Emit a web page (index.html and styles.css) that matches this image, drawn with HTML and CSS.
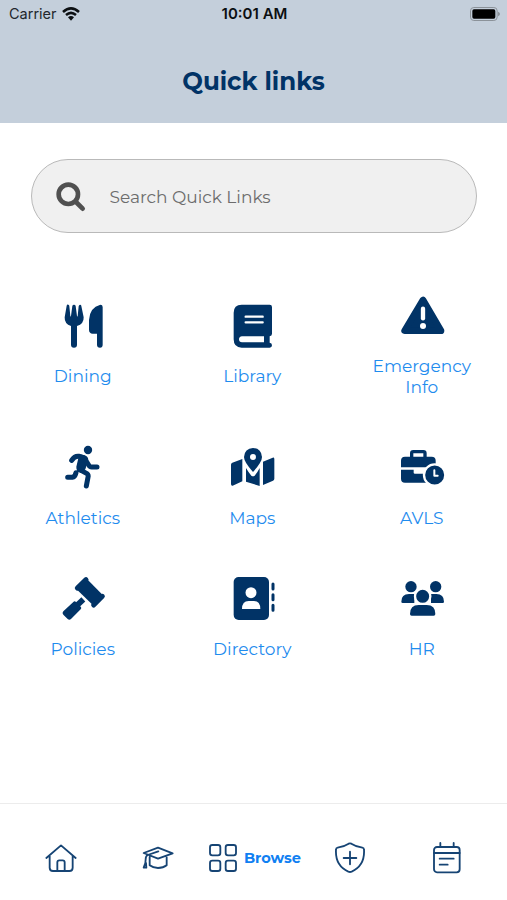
FILE: index.html
```html
<!DOCTYPE html>
<html lang="en">
<head>
    <meta charset="UTF-8">
    <meta name="viewport" content="width=device-width, initial-scale=1.0">
    <title>Quick links</title>
    <link rel="stylesheet" href="styles.css">
</head>
<body>
    <!-- Header -->
    <header class="header">
        <div class="status-bar">
            <div class="carrier">
                <span>Carrier</span>
                <svg class="wifi" viewBox="0 0 54 42">
                    <path d="M3 15Q27 -7 51 15M12 24Q27 11 42 24" fill="none" stroke="#0c0f12" stroke-width="7.500"/>
                    <path d="M18 31Q27 23 36 31L27 41Z" fill="#0c0f12"/>
                </svg>
            </div>
            <span class="time">10:01 AM</span>
            <svg class="battery" viewBox="0 0 90 42">
                <rect x="1.5" y="1.5" width="80" height="39" rx="10" fill="none" stroke="#8b9299" stroke-width="3"/>
                <rect x="7" y="7" width="69" height="28" rx="5" fill="#000"/>
                <path d="M84 14Q90 17 90 21Q90 25 84 28Z" fill="#8b9299"/>
            </svg>
        </div>
        <h1>Quick links</h1>
    </header>

    <!-- Main content -->
    <main class="main-content">
        <div class="search">
            <svg viewBox="0 0 90 90">
                <circle cx="37" cy="37" r="29" fill="none" stroke="#505050" stroke-width="14"/>
                <path d="M60 60L80 80" stroke="#505050" stroke-width="14" stroke-linecap="round"/>
            </svg>
            <input type="text" placeholder="Search Quick Links" aria-label="Search Quick Links">
        </div>

        <div class="links">
            <a class="link">
                <svg viewBox="0 0 132 132">
                    <path d="M17 5Q18 1 22 2Q25 2 25 7L28 36Q29 39 30 36L34 6Q35 2 39 2Q43 2 44 6L48 36Q49 39 50 36L53 7Q54 2 57 2Q61 2 61 6L68 40Q69 60 48 66V122Q48 131 39 131Q30 131 30 122V66Q10 60 11 40Z"/>
                    <path d="M118 2Q125 2 125 9V122Q125 131 117 131Q108 131 108 122V89H95Q84 88 84 77V48Q86 10 118 2Z"/>
                </svg>
                <span>Dining</span>
            </a>
            <a class="link">
                <svg viewBox="-1 0 132 132">
                    <path fill-rule="evenodd" d="M34 2H118Q125 2 125 9V89Q125 95 118 97V116Q125 117 125 124Q125 131 118 131H34Q10 131 10 106V26Q10 2 34 2ZM35 97Q26 98 26 106Q26 115 35 115H101V97Z"/>
                    <path class="cut" d="M46 38H97M46 55H97"/>
                </svg>
                <span>Library</span>
            </a>
            <a class="link">
                <svg viewBox="0 0 132 132">
                    <path d="M69 18L14 110H123Z" stroke="#013366" stroke-width="20" stroke-linejoin="round"/>
                    <path d="M69 44V73" stroke="#fff" stroke-width="13" stroke-linecap="round"/>
                    <circle cx="69" cy="96" r="9" fill="#fff"/>
                </svg>
                <span>Emergency<br>Info</span>
            </a>
            <a class="link">
                <svg viewBox="0 0 132 132">
                    <circle cx="81" cy="12" r="12.500"/>
                    <path d="M54 23L73 29Q84 33 81 44L73 70L60 81Q45 76 46 62L52 37Z"/>
                    <path class="limb" d="M32 43Q41 29 54 31L69 35L83 57Q86 63 92 63H108M56 71L78 83Q83 87 81 94L76 120M45 80Q42 93 34 94H20"/>
                </svg>
                <span>Athletics</span>
            </a>
            <a class="link">
                <svg viewBox="-1 0 132 132">
                    <path d="M6 50L36 39V106L7 119Q2 120 2 114V56Q2 52 6 50ZM98 47L127 35Q132 34 132 39V98Q132 102 128 104L98 117Z"/>
                    <path d="M47 66Q55 80 63 89Q68 93 73 89Q81 80 88 66V120L47 107Z"/>
                    <path d="M68 78Q41 48 41 33Q43 7 68 6Q93 7 95 33Q95 48 68 78Z"/>
                    <circle cx="68" cy="33" r="9" fill="#fff"/>
                </svg>
                <span>Maps</span>
            </a>
            <a class="link">
                <svg viewBox="0 0 132 132">
                    <path d="M35 36V22Q35 17 40 17H70Q75 17 75 22V36" fill="none" stroke="#013366" stroke-width="10"/>
                    <path d="M15 32H95Q107 32 107 44V64H3V44Q3 32 15 32ZM3 71H41V80Q41 83 45 83H107V110H15Q3 110 3 98Z"/>
                    <circle cx="104" cy="87" r="32" stroke="#fff" stroke-width="7"/>
                    <path d="M103 73V89H113" fill="none" stroke="#fff" stroke-width="6" stroke-linecap="round" stroke-linejoin="round"/>
                </svg>
                <span>AVLS</span>
            </a>
            <a class="link">
                <svg viewBox="0 0 132 132">
                    <path d="M49 39L80 8L123 52L93 82Z"/>
                    <path d="M49 33L75 8M98 84L124 58" stroke="#013366" stroke-width="15" stroke-linecap="round"/>
                    <path d="M48 85L67 67" stroke="#013366" stroke-width="17"/>
                    <path d="M37 75Q41 71 45 75L59 89Q63 93 59 97L30 126Q25 131 20 126L7 113Q2 108 7 103Z"/>
                </svg>
                <span>Policies</span>
            </a>
            <a class="link">
                <svg viewBox="0 0 132 132">
                    <rect x="11" y="0" width="106" height="129" rx="15"/>
                    <circle cx="63" cy="47" r="16.500" fill="#fff"/>
                    <path d="M36 96Q36 72 56 72H71Q91 72 91 96Z" fill="#fff"/>
                    <path d="M129 21V36M129 53V68M129 85V100" stroke="#013366" stroke-width="9" stroke-linecap="round"/>
                </svg>
                <span>Directory</span>
            </a>
            <a class="link">
                <svg viewBox="0 0 132 132">
                    <circle cx="33" cy="29" r="17"/>
                    <circle cx="107" cy="29" r="17"/>
                    <path d="M4 74Q4 51 27 51H43V78H8Q4 78 4 74ZM93 51H109Q132 51 132 74Q132 78 128 78H93Z"/>
                    <circle cx="68" cy="58" r="23" stroke="#fff" stroke-width="7"/>
                    <path d="M30 111Q30 84 56 84H80Q106 84 106 111Q106 116 101 116H35Q30 116 30 111Z"/>
                </svg>
                <span>HR</span>
            </a>
        </div>
    </main>

    <!-- Bottom navigation -->
    <nav class="tab-bar">
        <a class="tab">
            <svg viewBox="0 0 96 96">
                <path d="M4 48L48 10L92 48M14 42V77Q14 87 24 87H73Q83 87 83 77V42M37 87V61Q37 55 43 55H53Q59 55 59 61V87"/>
            </svg>
        </a>
        <a class="tab">
            <svg viewBox="0 0 96 96">
                <path d="M5 33L48 17L92 34L48 50ZM23 45V70Q33 78 48 78Q64 78 74 70V46M49 28L17 39Q11 42 11 52L10 63M10 63L5 77H13L12 63"/>
            </svg>
        </a>
        <a class="tab">
            <svg viewBox="0 0 96 96">
                <rect x="9" y="9" width="31" height="31" rx="7"/>
                <rect x="56" y="9" width="31" height="31" rx="7"/>
                <rect x="9" y="56" width="31" height="31" rx="7"/>
                <rect x="56" y="56" width="31" height="31" rx="7"/>
            </svg>
            <span>Browse</span>
        </a>
        <a class="tab">
            <svg viewBox="0 0 96 96">
                <path d="M44 5Q48 3 52 5Q66 14 85 17Q90 18 90 23Q93 71 53 89Q48 91 43 89Q3 71 6 23Q6 18 11 17Q30 14 44 5ZM48 29V67M29 48H67"/>
            </svg>
        </a>
        <a class="tab">
            <svg viewBox="0 0 96 96">
                <rect x="9" y="15" width="77" height="76" rx="9"/>
                <path d="M9 33H86M28 3V15M68 3V15M26 50H68M26 68H50"/>
            </svg>
        </a>
    </nav>
</body>
</html>
```
FILE: styles.css
```css
* {
    margin: 0;
    padding: 0;
    box-sizing: border-box;
}

body {
    font-family: Montserrat, Inter, sans-serif;
    background: #fff;
    color: #013366;
    height: 900px;
    display: flex;
    flex-direction: column;
    overflow: hidden;
}

/* Header */
.header {
    height: 123px;
    background: #c4cfdb;
}

.status-bar {
    height: 27px;
    padding: 0 7px 0 9px;
    display: grid;
    grid-template-columns: 1fr auto 1fr;
    align-items: center;
    font-family: Inter, sans-serif;
    font-size: 14.5px;
    color: #22272c;
}

.carrier {
    display: flex;
    align-items: center;
    gap: 5px;
}

.wifi {
    width: 18px;
    height: 14px;
}

.time {
    font-size: 15px;
    font-weight: 600;
    color: #0c0f12;
}

.battery {
    width: 30px;
    height: 14px;
    justify-self: end;
}

.header h1 {
    margin-top: 38px;
    font-size: 24.5px;
    line-height: 32px;
    font-weight: 700;
    text-align: center;
}

/* Main content */
.main-content {
    flex: 1;
}

.search {
    display: flex;
    align-items: center;
    gap: 23.5px;
    width: 446px;
    height: 74px;
    margin: 36px 0 0 31px;
    padding: 2px 24px 0;
    background: #f0f0f0;
    border: 1px solid #b9b9b9;
    border-radius: 37px;
}

.search svg {
    width: 30px;
    height: 30px;
}

.search input {
    flex: 1;
    border: none;
    outline: none;
    background: none;
    font-family: inherit;
    font-size: 17px;
}

.search input::placeholder {
    color: #6c6c6c;
    opacity: 1;
}

/* Link grid */
.links {
    display: grid;
    grid-template-columns: repeat(3, 169.5px);
    row-gap: 48px;
    align-items: center;
    margin: 61px 0 0 -2px;
}

.link {
    display: flex;
    flex-direction: column;
    align-items: center;
    gap: 18px;
    font-size: 17px;
    line-height: 21px;
    text-align: center;
    color: #1f8cee;
}

.link:nth-child(-n+3) {
    min-height: 85px;
}

.link svg {
    width: 44px;
    height: 44px;
    fill: #013366;
    overflow: visible;
}

.link .cut {
    stroke: #fff;
    stroke-width: 7;
    stroke-linecap: round;
}

.link .limb {
    fill: none;
    stroke: #013366;
    stroke-width: 15;
    stroke-linecap: round;
    stroke-linejoin: round;
}

/* Bottom navigation */
.tab-bar {
    height: 97px;
    padding: 11px 12px 0 13px;
    display: grid;
    grid-template-columns: repeat(5, 1fr);
    align-items: center;
    border-top: 1px solid #ececec;
}

.tab {
    display: flex;
    align-items: center;
    justify-content: center;
    gap: 5px;
}

.tab svg {
    flex: none;
    width: 32px;
    height: 32px;
    fill: none;
    stroke: #164474;
    stroke-width: 5.5;
    stroke-linecap: round;
    stroke-linejoin: round;
}

.tab span {
    font-size: 14.6px;
    font-weight: 700;
    color: #1080f2;
}
```
